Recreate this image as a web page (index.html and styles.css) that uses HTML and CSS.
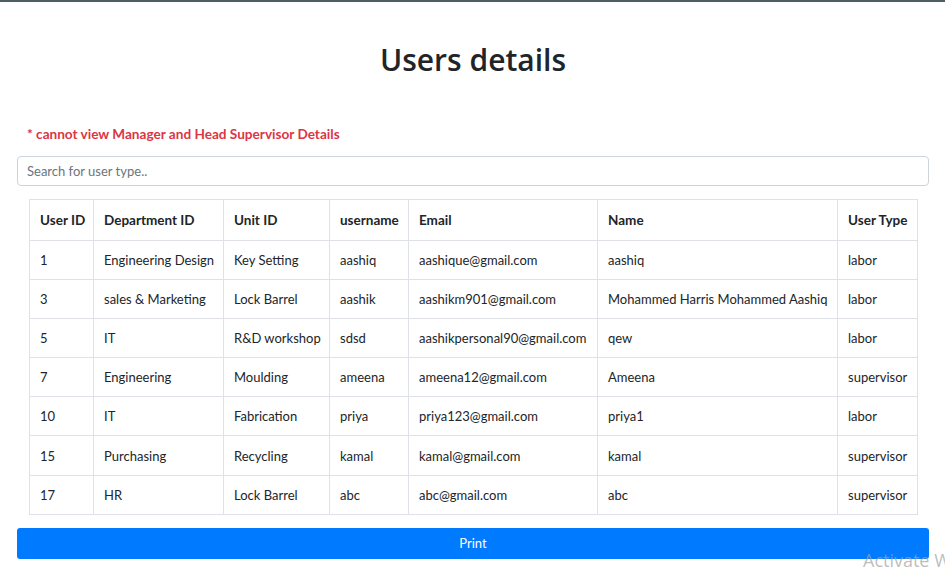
FILE: index.html
```html
<!DOCTYPE html>
<html>
<head>
<meta charset="utf-8">
<link rel="stylesheet" href="styles.css">
</head>
<body>
<div class="topbar"></div>
<main class="page">
  <h1 class="title">Users details</h1>
  <p class="warning">* cannot view Manager and Head Supervisor Details</p>
  <input class="search" type="text" placeholder="Search for user type..">
  <div class="table-wrap">
    <table class="users">
      <colgroup>
        <col style="width:64px">
        <col style="width:130px">
        <col style="width:106px">
        <col style="width:79px">
        <col style="width:189px">
        <col style="width:240px">
        <col style="width:80px">
      </colgroup>
      <thead>
        <tr><th>User ID</th><th>Department ID</th><th>Unit ID</th><th>username</th><th>Email</th><th>Name</th><th>User Type</th></tr>
      </thead>
      <tbody>
        <tr><td>1</td><td>Engineering Design</td><td>Key Setting</td><td>aashiq</td><td>aashique@gmail.com</td><td>aashiq</td><td>labor</td></tr>
        <tr><td>3</td><td>sales &amp; Marketing</td><td>Lock Barrel</td><td>aashik</td><td>aashikm901@gmail.com</td><td>Mohammed Harris Mohammed Aashiq</td><td>labor</td></tr>
        <tr><td>5</td><td>IT</td><td>R&amp;D workshop</td><td>sdsd</td><td>aashikpersonal90@gmail.com</td><td>qew</td><td>labor</td></tr>
        <tr><td>7</td><td>Engineering</td><td>Moulding</td><td>ameena</td><td>ameena12@gmail.com</td><td>Ameena</td><td>supervisor</td></tr>
        <tr><td>10</td><td>IT</td><td>Fabrication</td><td>priya</td><td>priya123@gmail.com</td><td>priya1</td><td>labor</td></tr>
        <tr><td>15</td><td>Purchasing</td><td>Recycling</td><td>kamal</td><td>kamal@gmail.com</td><td>kamal</td><td>supervisor</td></tr>
        <tr><td>17</td><td>HR</td><td>Lock Barrel</td><td>abc</td><td>abc@gmail.com</td><td>abc</td><td>supervisor</td></tr>
      </tbody>
    </table>
  </div>
  <button class="print" type="button">Print</button>
</main>
<div class="watermark">Activate Windows</div>
</body>
</html>
```
FILE: styles.css
```css
html, body {
  margin: 0;
  padding: 0;
  background: #fff;
  overflow: hidden;
}
body {
  font-family: "Lato", "Open Sans", sans-serif;
  font-size: 13px;
  color: #212529;
  height: 574px;
  position: relative;
}
.topbar {
  height: 2px;
  background: #4f5d64;
}
.page {
  padding: 0 16px 0 17px;
  display: flex;
  flex-direction: column;
}
.title {
  margin: 39px 0 0;
  text-align: center;
  font-family: "Open Sans", sans-serif;
  font-size: 30px;
  font-weight: 600;
  line-height: 38px;
  color: #212529;
}
.warning {
  margin: 45px 0 0 10px;
  color: #dc3545;
  font-weight: 700;
  font-size: 13.6px;
  line-height: 20px;
}
.search {
  margin-top: 12px;
  box-sizing: border-box;
  height: 30px;
  width: 100%;
  border: 1px solid #ced4da;
  border-radius: 4px;
  padding: 0 9px;
  font-family: inherit;
  font-size: 13px;
  color: #495057;
  outline: none;
}
.search::placeholder {
  color: #6c757d;
}
.table-wrap {
  margin: 13px 12px 0;
}
.users {
  width: 100%;
  table-layout: fixed;
  border-collapse: collapse;
}
.users th, .users td {
  border: 1px solid #dee2e6;
  padding: 0 10px;
  height: 39.1px;
  text-align: left;
  vertical-align: middle;
  white-space: nowrap;
  box-sizing: border-box;
}
.users th {
  font-weight: 700;
  font-size: 13.5px;
  height: 41px;
}
.print {
  margin-top: 13px;
  height: 31px;
  width: 100%;
  border: none;
  border-radius: 3px;
  background: #007bff;
  color: #fff;
  font-family: inherit;
  font-size: 13px;
}
.watermark {
  position: absolute;
  left: 863px;
  top: 548px;
  font-family: "Open Sans", sans-serif;
  font-size: 18px;
  color: rgba(160, 160, 160, 0.7);
  white-space: nowrap;
}
```
